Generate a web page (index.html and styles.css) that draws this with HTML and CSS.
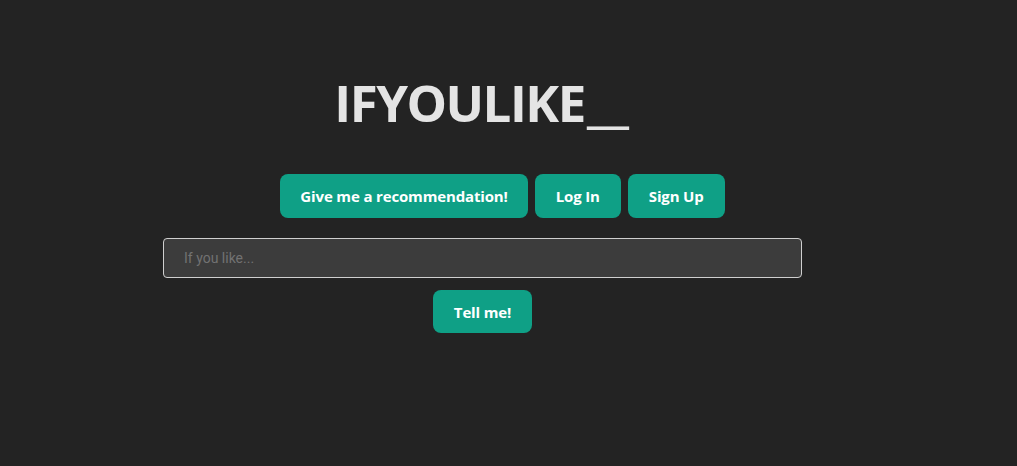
FILE: index.html
```html
<!DOCTYPE html>
<html>
<head>
<meta charset="utf-8">
<link rel="stylesheet" href="styles.css">
</head>
<body>
<main class="page">
  <h1 class="title">IFYOULIKE<span class="cursor">_</span></h1>
  <div class="actions">
    <button class="btn btn-wide">Give me a recommendation!</button>
    <button class="btn">Log In</button>
    <button class="btn">Sign Up</button>
  </div>
  <input class="search" type="text" placeholder="If you like...">
  <button class="btn btn-submit">Tell me!</button>
</main>
</body>
</html>
```
FILE: styles.css
```css
html, body {
  margin: 0;
  padding: 0;
  background: #232323;
  height: 100%;
}
.page {
  width: 965px;
  display: flex;
  flex-direction: column;
  align-items: center;
  font-family: "Open Sans", "Noto Sans", sans-serif;
}
.title {
  margin: 66px 0 0 0;
  font-size: 51px;
  line-height: 72px;
  font-weight: 700;
  color: #e4e4e4;
  letter-spacing: -1.5px;
  padding-left: 2px;
}
.cursor {
  display: inline-block;
  width: 46px;
  margin-left: 2px;
  transform: scaleX(2);
  transform-origin: left center;
}
.actions {
  display: flex;
  gap: 7px;
  margin-top: 36px;
  padding-left: 40px;
}
.btn {
  background: #0fa086;
  color: #ffffff;
  border: none;
  border-radius: 8px;
  height: 44px;
  padding: 0 21px;
  font-family: "Open Sans", "Noto Sans", sans-serif;
  font-weight: 700;
  font-size: 15px;
  letter-spacing: -0.15px;
  cursor: pointer;
}
.btn-wide {
  padding: 0 20px;
}
.btn-signup {
  padding: 0 22px;
}
.search {
  box-sizing: border-box;
  margin-top: 20px;
  width: 639px;
  height: 40px;
  background: #3c3c3c;
  border: 1px solid #cfcfcf;
  border-radius: 4px;
  padding: 0 20px;
  font-family: Roboto, sans-serif;
  font-size: 14px;
  color: #dddddd;
}
.search::placeholder {
  color: #727272;
}
.btn-submit {
  margin-top: 12px;
  height: 43px;
}
```
